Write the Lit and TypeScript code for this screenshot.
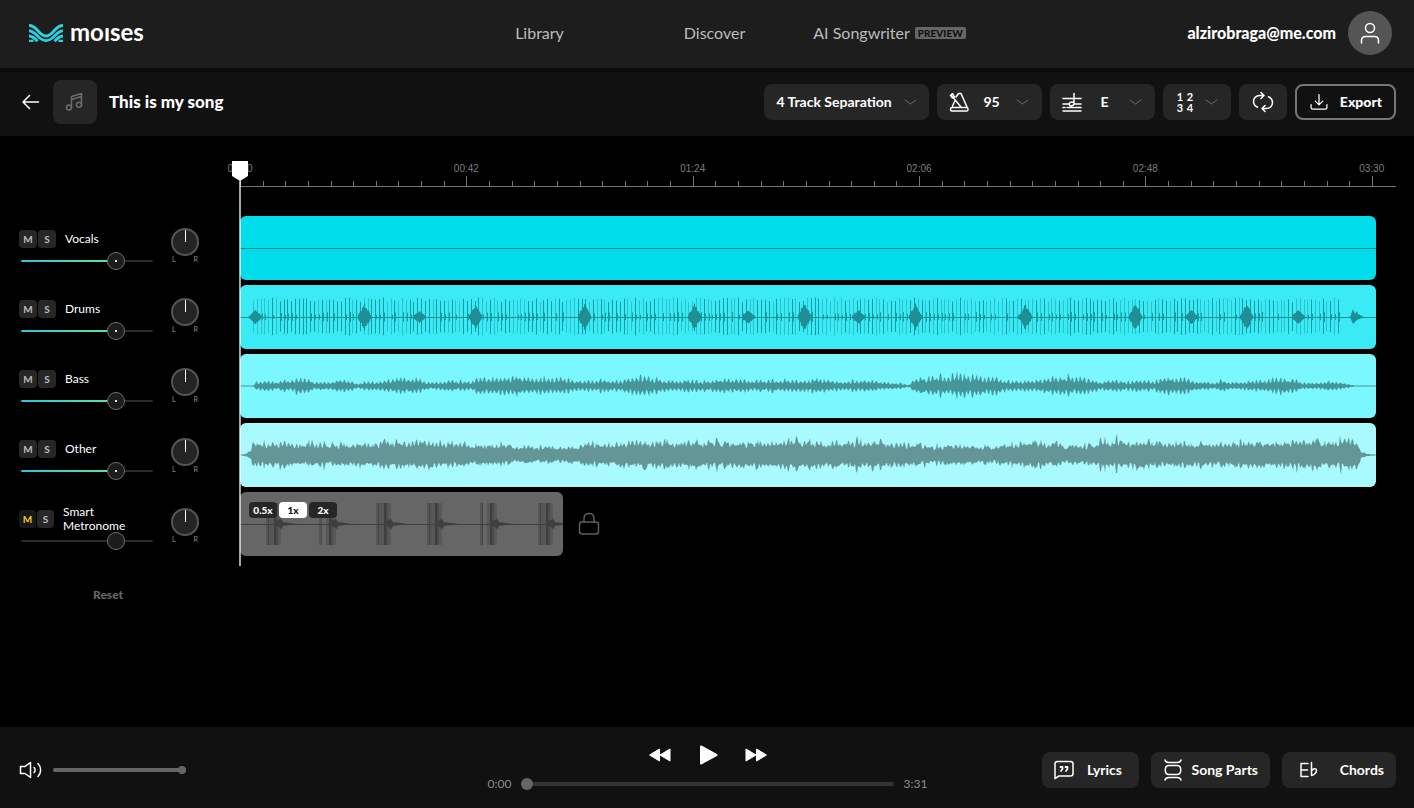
import { LitElement, html, svg, css, nothing } from "lit";
import { customElement, property } from "lit/decorators.js";
import { classMap } from "lit/directives/class-map.js";

const CLIP_W = 1136;
const MID = 32;

/* Small deterministic generator, so that every render draws the same wave. */
function noise(seed: number) {
  let s = seed;
  return () => {
    s = (s * 1664525 + 1013904223) % 4294967296;
    return s / 4294967296;
  };
}

type Point = [number, number];

function envelopeAt(points: Point[], x: number) {
  for (let i = 1; i < points.length; i++) {
    if (x <= points[i][0]) {
      const [x0, y0] = points[i - 1];
      const [x1, y1] = points[i];
      return y0 + ((y1 - y0) * (x - x0)) / (x1 - x0);
    }
  }
  return points[points.length - 1][1];
}

function wavePath(points: Point[], seed: number, rough: number, spike: number) {
  const rnd = noise(seed);
  const top: string[] = [];
  const bottom: string[] = [];
  let swell = 1;
  for (let x = 0; x <= CLIP_W; x++) {
    const e = envelopeAt(points, x);
    if (x % 4 === 0) swell = 0.85 + rnd() * 0.3;
    const beat = (x % 4 < 2 ? 1 : 1 - rough) * swell;
    const peak = rnd() > 0.93 ? spike : 1;
    const up = Math.max(0.5, e * beat * peak * (0.75 + rnd() * 0.45));
    const down = Math.max(0.5, e * beat * peak * (0.75 + rnd() * 0.4));
    top.push(`${x} ${(MID - up).toFixed(1)}`);
    bottom.unshift(`${x} ${(MID + down).toFixed(1)}`);
  }
  return `M${top.join("L")}L${bottom.join("L")}Z`;
}

const BASS: Point[] = [
  [0, 0.5], [13, 0.5], [15, 4], [30, 5], [38, 4], [45, 6], [50, 4], [56, 8], [68, 6], [76, 3], [90, 4], [98, 6],
  [110, 5], [117, 2], [128, 5], [140, 4], [150, 6], [160, 7], [180, 6], [185, 4], [200, 4], [215, 5], [232, 4],
  [237, 8], [262, 8], [276, 10], [290, 8], [320, 8], [335, 6], [350, 5], [365, 6], [380, 5], [392, 8], [405, 10],
  [415, 7], [430, 5], [450, 6], [470, 5], [490, 7], [515, 5], [540, 6], [560, 5], [580, 7], [600, 4], [620, 6],
  [640, 4], [660, 3], [668, 1], [676, 7], [690, 10], [705, 9], [722, 11], [735, 9], [755, 8], [770, 5], [785, 5],
  [800, 6], [815, 8], [838, 9], [850, 6], [862, 4], [875, 6], [890, 4], [900, 6], [912, 4], [925, 8], [945, 8],
  [958, 4], [975, 3], [981, 6], [990, 3], [1010, 5], [1022, 5], [1035, 8], [1055, 6], [1065, 3], [1080, 3],
  [1090, 5], [1105, 3], [1112, 1], [1118, 0.5], [1136, 0.5],
];

const OTHER: Point[] = [
  [0, 0.5], [5, 1], [10, 4], [14, 11], [40, 12], [60, 10], [75, 11], [120, 11], [130, 10], [145, 13], [175, 12],
  [188, 14], [200, 12], [225, 12], [238, 9], [262, 10], [280, 8], [310, 8], [338, 8], [350, 11], [380, 11],
  [420, 13], [450, 12], [480, 13], [520, 12], [560, 14], [590, 12], [640, 13], [672, 10], [690, 8], [720, 9],
  [750, 8], [775, 11], [815, 12], [825, 8], [845, 10], [860, 13], [885, 12], [905, 13], [940, 12], [980, 12],
  [1005, 12], [1030, 12], [1060, 13], [1100, 13], [1117, 13], [1121, 4], [1128, 1], [1134, 0.5], [1136, 0.5],
];

const ACCENTS: Point[] = [
  [15, 6], [124, 12], [179, 5], [235, 12], [344, 13], [454, 12], [508, 6], [564, 13], [618, 6], [675, 12],
  [785, 12], [895, 13], [951, 6], [1006, 12], [1058, 6],
];

const TICK_GROUPS: [number, number, number][] = [
  [26, 5, 10], [79, 2, 17], [136, 5, 9], [187, 5, 10], [240, 3, 17], [298, 5, 9],
];

function drumsWave() {
  const rnd = noise(77);
  const dark: string[] = [];
  const soft: string[] = [];
  for (let i = 0; i < 285; i++) {
    const x = Math.round(13 + i * 3.82);
    if (x > 1100) break;
    const h = 15 + rnd() * 4.5;
    const line = `M${x}.5 ${(MID - h).toFixed(1)}V${(MID + h - 1).toFixed(1)}`;
    (rnd() > 0.5 ? dark : soft).push(line);
    if (rnd() > 0.4) {
      const s = 2 + rnd() * 3;
      dark.push(`M${x + 1}.5 ${(MID - s).toFixed(1)}V${(MID + s).toFixed(1)}`);
    }
  }
  const gems: string[] = [];
  for (const [x, h] of ACCENTS) {
    for (let d = -6; d <= 6; d++) {
      const s = h * (1 - Math.abs(d) / 7) * (0.8 + rnd() * 0.35) + 0.5;
      gems.push(`M${x + d}.5 ${(MID - s).toFixed(1)}V${(MID + s).toFixed(1)}`);
    }
  }
  return svg`
    <path d=${soft.join("")} stroke="#1c9aa3" stroke-opacity=".5" fill="none" />
    <path d=${dark.join("")} stroke="#128d97" stroke-opacity=".85" fill="none" />
    <path d="M0 32.500H1136" stroke="#1f8f96" />
    <path d=${gems.join("")} stroke="#208e95" stroke-width="1.200" fill="none" />
    <path d="M1110 32L1113 24L1115 29L1117 26L1118 29L1124 32L1117 35L1113 39Z" fill="#208e95" />`;
}

function metronomeWave() {
  return svg`
    <path d="M0 32.500H323" stroke="#404040" />
    ${TICK_GROUPS.map(([x, a, b]) => {
      const centre = x + (b > 12 ? b - 7 : 8);
      return svg`
        <rect x=${x} y="11" width=${a} height="42" fill="#404040" opacity=".45" />
        <rect x=${x + 2} y="11" width="1" height="42" fill="#3a3a3a" opacity=".6" />
        <rect x=${centre - 3} y="11" width="3" height="42" fill="#404040" opacity=".4" />
        <rect x=${centre} y="11" width="2" height="42" fill="#3a3a3a" opacity=".9" />
        <rect x=${centre + 2} y="11" width="2" height="42" fill="#3a3a3a" opacity=".6" />
        <rect x=${centre + 4} y="11" width="3" height="42" fill="#404040" opacity=".35" />
        <path d="M${centre - 1} 32L${centre + 2} 29L${centre + 7} 27L${centre + 9} 30L${centre + 24} 32L${
          centre + 9
        } 34L${centre + 8} 37L${centre + 2} 34Z" fill="#404040" />`;
    })}`;
}

const icons = {
  logo: svg`<g fill="none" stroke="#29d3e0" stroke-width="2.800">
    <path d="M0 1.500C8.500 1.500 9.500 12 17 12S25.500 1.500 34 1.500" />
    <path d="M0 6.800C7.500 7 9 16.600 17 16.600S26.500 7 34 6.800" />
    <path d="M0 12C4 12.200 6 14.500 8.500 17.300M34 12C30 12.200 28 14.500 25.500 17.300" />
    <path d="M0 16.800H4.500M29.500 16.800H34" stroke-width="2.200" /></g>`,
  user: svg`<circle cx="12" cy="7" r="4.500" /><path d="M3.500 22V19.500C3.500 17 5 15.500 7.500 15.500H16.500C19 15.500 20.500 17 20.500 19.500V22" />`,
  back: svg`<path d="M19.500 12H4M10.500 5.500L4 12L10.500 18.500" />`,
  note: svg`<circle cx="6" cy="17.500" r="2.500" /><circle cx="16" cy="14.800" r="2.500" /><path d="M8.500 17.500V6.500L18.500 3.500V14.800M8.500 9.500L18.500 6.500" />`,
  metronome: svg`<path d="M9 7L11.500 3.500H14L20 17M8 10.500L5.500 16M5 17.500H19.500C20.300 17.500 21 18.200 21 19V19.500C21 20.300 20.300 21 19.500 21H5C4.200 21 3.500 20.300 3.500 19.500V19C3.500 18.200 4.200 17.500 5 17.500ZM4.500 5.500L14 17" /><path d="M3.500 5.500L5.500 3.500L7.500 7L5.500 8Z" />`,
  pitch: svg`<path d="M3 8.500H21M3 14H9M15 14H21M3 21H21M3 17.500H5M7 17.500H21M14 3.500V14M14 12.500C11 11 8.500 13 9.500 15C10.500 16.500 13.500 16 14 14" />`,
  loop: svg`<path d="M13 5.500H8.500C5 5.500 2.500 8.200 2.500 11.500C2.500 14 4 16 6.500 17.200M11 18.500H15.500C19 18.500 21.500 15.800 21.500 12.500C21.500 10 20 8 17.500 6.800M10 2.500L13 5.500L10 8.500M14 15.500L11 18.500L14 21.500" />`,
  download: svg`<path d="M12 3V15M7.500 11L12 15.500L16.500 11M2.500 15V18.500C2.500 19.900 3.100 20.500 4.500 20.500H19.500C20.900 20.500 21.500 19.900 21.500 18.500V15" />`,
  chevron: svg`<path d="M1 1L6.500 5L12 1" />`,
  volume: svg`<path d="M1.500 8.500H6L11.500 4.500V19.500L6 15.500H1.500ZM15 9.500C16.500 10.800 16.500 13.200 15 14.500M19 5.500C22.500 9 22.500 15 19 18.500" />`,
  lock: svg`<rect x="2.500" y="10" width="19" height="12" rx="2.500" /><path d="M7 10V6.500C7 3.500 9 1.500 12 1.500S17 3.500 17 6.500V10" />`,
  lyrics: svg`<path d="M3 20.500V6C3 4.500 4 3.500 5.500 3.500H18.500C20 3.500 21 4.500 21 6V15.500C21 17 20 18 18.500 18H7Z" /><path d="M8.500 9H10.500V10.800L9 13M13.500 9H15.500V10.800L14 13" stroke-width="1.800" />`,
  parts: svg`<path d="M4 2C4.500 4 6 4.500 8 4.500H16C18 4.500 19.500 4 20 2M4 22C4.500 20 6 19.500 8 19.500H16C18 19.500 19.500 20 20 22M8 7.500H16C21 7.500 21 16.500 16 16.500H8C3 16.500 3 7.500 8 7.500Z" />`,
  chords: svg`<path d="M11 5.500H4V18.500H11M4 12H10.500M14.500 4.500V17.500C17 17 19.500 14.800 19.500 12.500C19.500 10.300 16.500 10 14.500 12.800" />`,
};

const icon = (shape: unknown, size = 24) =>
  html`<svg class="icon" viewBox="0 0 24 24" width=${size} height=${size} aria-hidden="true">${shape}</svg>`;

const chevron = html`<svg class="icon chevron" viewBox="0 0 13 6" width="13" height="6" aria-hidden="true">
  ${icons.chevron}
</svg>`;

const shared = css`
  *, *::before, *::after { box-sizing: border-box; }
  button, select, input { font: inherit; color: inherit; margin: 0; }
  button { border: 0; padding: 0; background: none; cursor: pointer; }
  .icon { flex: none; display: block; fill: none; stroke: currentColor; stroke-width: 1.5; stroke-linejoin: round; stroke-linecap: round; }
`;

@customElement("track-strip")
class TrackStrip extends LitElement {
  @property() name = "";
  @property({ type: Boolean }) muted = false;

  static styles = [
    shared,
    css`
      :host { display: grid; grid-template-columns: 135px 30px; column-gap: 16px; height: 70px; padding: 8px 0 0 19px; }
      .head { display: flex; align-items: center; height: 28px; margin-top: 1px; }
      .toggle { width: 18px; height: 18px; border-radius: 4px; background: #272727; color: #bdbdbd; font-size: 10px; font-weight: 700; line-height: 18px; }
      .toggle + .toggle { margin-left: 1px; }
      .toggle.on { background: #181818; color: #f2c620; }
      .name { margin-left: 9px; font-size: 12px; line-height: 14px; color: #fff; }
      .level { display: block; width: 132px; height: 16px; margin: 0 2px; appearance: none; background: none; }
      .level::-webkit-slider-runnable-track { height: 2px; border-radius: 1px; background: linear-gradient(90deg, #30c3dc, #5fe59a) 0 0 / 75% 100% no-repeat #2a2a2a; }
      .level.off::-webkit-slider-runnable-track { background: #2a2a2a; }
      .level::-webkit-slider-thumb { appearance: none; width: 18px; height: 18px; margin-top: -8px; border: 1px solid #6e6e6e; border-radius: 50%; background: radial-gradient(circle, #d8f5f5 1px, #1c1c1c 1px); }
      .level.off::-webkit-slider-thumb { background: #1c1c1c; }
      .pan { display: flex; flex-direction: column; align-items: center; padding-top: 4px; }
      .knob { width: 28px; height: 28px; appearance: none; border: 2px solid #555; border-radius: 50%; background: #242424; }
      .knob::-webkit-slider-runnable-track { height: 24px; }
      .knob::-webkit-slider-thumb { appearance: none; width: 1px; height: 12px; background: #fff; }
      .ends { display: flex; justify-content: space-between; width: 26px; font-size: 7px; line-height: 7px; color: #8a8a8a; }
    `,
  ];

  render() {
    return html`
      <div>
        <div class="head">
          <button class=${classMap({ toggle: true, on: this.muted })} aria-label="Mute ${this.name}">M</button>
          <button class="toggle" aria-label="Solo ${this.name}">S</button>
          <label class="name" for="level">${this.name}</label>
        </div>
        <input id="level" class=${classMap({ level: true, off: this.muted })} type="range" value="75" />
      </div>
      <div class="pan">
        <input class="knob" type="range" value="50" aria-label="${this.name} pan" />
        <div class="ends"><span>L</span><span>R</span></div>
      </div>
    `;
  }
}

@customElement("time-ruler")
class TimeRuler extends LitElement {
  static styles = [
    shared,
    css`
      :host { display: flex; height: 27px; padding-right: 20px; border-bottom: 1px solid #757575; font: 10px/14px "Liberation Sans", Arial, sans-serif; color: #7d7d7d; }
      .span { flex: 420; display: grid; grid-template-rows: 16px 10px; }
      .rest { flex: 8; }
      .mark { display: flex; justify-content: center; width: 0; padding-top: 2px; }
      .ticks { display: flex; align-items: flex-end; }
      .tick { flex: 1; height: 5px; border-left: 1px solid #757575; }
      .tick:first-child { height: 10px; }
    `,
  ];

  render() {
    return html`
      ${["00:00", "00:42", "01:24", "02:06", "02:48"].map(
        (t) => html`<div class="span">
          <div class="mark"><span>${t}</span></div>
          <div class="ticks">${Array.from({ length: 10 }, () => html`<span class="tick"></span>`)}</div>
        </div>`
      )}
      <div class="span rest">
        <div class="mark"><span>03:30</span></div>
        <div class="ticks"><span class="tick"></span></div>
      </div>
    `;
  }
}

@customElement("app-root")
class AppRoot extends LitElement {
  static styles = [
    shared,
    css`
      :host { display: flex; flex-direction: column; min-height: 100vh; background: #000; color: #fff; font: 14px/20px Lato, "Open Sans", sans-serif; }
      .top { display: grid; grid-template-columns: 1fr auto 1fr; align-items: center; height: 68px; padding: 0 22px 2px 29px; background: #1d1d1d; }
      .brand { display: flex; align-items: center; gap: 7px; color: #fff; text-decoration: none; font-size: 24px; line-height: 20px; font-weight: 700; }
      .brand span { padding-bottom: 2px; }
      .nav { display: grid; grid-template-columns: repeat(3, 175px); justify-items: center; padding-left: 8px; font-size: 16px; }
      .nav a { display: flex; align-items: center; gap: 5px; color: #bcbcbc; text-decoration: none; white-space: nowrap; }
      .badge { padding: 0 3px; border-radius: 2px; background: #666; color: #111; font-size: 10px; line-height: 12px; font-weight: 900; }
      .account { display: flex; align-items: center; justify-content: flex-end; gap: 12px; font-size: 16px; font-weight: 900; }
      .avatar { display: grid; place-items: center; width: 44px; height: 44px; border-radius: 50%; background: #555; }
      .bar { display: flex; align-items: center; gap: 8px; height: 68px; padding: 0 18px 4px 19px; border-top: 4px solid #0b0b0b; background: #111; }
      .cover { display: grid; place-items: center; width: 44px; height: 44px; margin: 0 4px 0 2px; border-radius: 8px; background: #262626; color: #6b6b6b; }
      .title { flex: 1; margin: 0; font-size: 17px; line-height: 20px; font-weight: 900; }
      .pill { display: flex; align-items: center; justify-content: space-between; height: 36px; padding: 0 12px; border-radius: 8px; background: #262626; font-size: 14px; font-weight: 700; }
      .pill select { appearance: none; border: 0; background: none; padding: 0; text-align: center; cursor: pointer; }
      .chevron { stroke: #6c6c6c; stroke-width: 1; }
      .pick { gap: 12px; }
      .value { width: 105px; padding: 0 13px 0 10px; }
      .pill.value select { padding-right: 4px; }
      .bars { width: 68px; padding: 0 13px; }
      .count { display: grid; grid-template-columns: 8px 8px; gap: 0 2px; font-size: 11px; line-height: 11px; }
      .square { width: 48px; }
      .export { width: 101px; border: 2px solid #767676; background: none; font-weight: 900; }
      .studio { flex: 1; display: grid; grid-template-columns: 220px 1fr; column-gap: 20px; align-items: start; padding: 24px 18px 24px 0; }
      .strips { display: flex; flex-direction: column; padding-top: 56px; }
      .reset { align-self: flex-start; margin: 19px 0 0 93px; font-size: 12px; line-height: 20px; font-weight: 900; color: #666; }
      .timeline { position: relative; padding-bottom: 10px; }
      .lanes { display: flex; flex-direction: column; gap: 5px; padding: 29px 20px 0 0; }
      .clip { height: 64px; overflow: hidden; border-radius: 6px; }
      .wave { display: block; width: 100%; height: 64px; }
      .vocals { background: #00dce9; }
      .drums { background: #3aebf5; }
      .bass { background: #7af7ff; }
      .other { background: #a8faff; }
      .locked { display: flex; align-items: center; gap: 14px; color: #5c5c5c; }
      .click { position: relative; width: 323px; background: #666; }
      .speeds { position: absolute; top: 10px; left: 9px; display: flex; gap: 2px; }
      .speed { width: 28px; height: 16px; border-radius: 4px; background: #262626; color: #fff; font-size: 10px; line-height: 16px; font-weight: 900; }
      .speed.on { background: #fff; color: #111; }
      .playhead { position: absolute; top: 1px; bottom: 0; left: -8px; width: 16px; display: flex; flex-direction: column; align-items: center; pointer-events: none; }
      .grip { flex: none; width: 16px; height: 20px; background: #fff; clip-path: polygon(0 0, 100% 0, 100% 75%, 50% 100%, 0 75%); }
      .needle { flex: 1; width: 2px; background: #fff; opacity: 0.65; }
      .player { display: grid; grid-template-columns: 1fr 440px 1fr; align-items: center; height: 81px; padding: 5px 18px 0 19px; background: #111; }
      .sound { display: flex; align-items: center; gap: 10px; }
      .slim { appearance: none; display: block; height: 12px; background: none; }
      .volume { width: 133px; }
      .volume::-webkit-slider-runnable-track { height: 4px; border-radius: 2px; background: #666; }
      .volume::-webkit-slider-thumb { appearance: none; width: 8px; height: 8px; margin-top: -2px; border-radius: 50%; background: #666; }
      .transport { display: flex; flex-direction: column; gap: 4px; padding-bottom: 6px; }
      .keys { display: flex; justify-content: center; align-items: center; gap: 24px; height: 30px; }
      .solid { display: block; fill: #fff; stroke: #fff; stroke-linejoin: round; }
      .seek { display: flex; align-items: center; gap: 10px; font-size: 12px; line-height: 20px; color: #8c8c8c; }
      .seek input { flex: 1; min-width: 0; }
      .position::-webkit-slider-runnable-track { height: 4px; border-radius: 2px; background: #333; }
      .position::-webkit-slider-thumb { appearance: none; width: 12px; height: 12px; margin-top: -4px; border-radius: 50%; background: #666; }
      .panels { display: flex; justify-content: flex-end; gap: 12px; }
      .panels .pill { padding: 0 12px 0 10px; }
      .parts { width: 119px; }
      .panels .lyrics { width: 97px; padding-right: 17px; }
      .panels .chords { width: 114px; padding-left: 15px; }
    `,
  ];

  private lane(kind: string, label: string, shape: unknown) {
    return html`<div class="clip ${kind}" role="img" aria-label="${label} waveform">
      <svg class="wave" viewBox="0 0 1136 64" preserveAspectRatio="none" aria-hidden="true">${shape}</svg>
    </div>`;
  }

  private select(label: string, value: string, shape: unknown = nothing) {
    return html`<label class="pill ${shape === nothing ? "pick" : "value"}">
      ${shape === nothing ? nothing : icon(shape)}
      <select aria-label=${label}><option>${value}</option></select>
      ${chevron}
    </label>`;
  }

  render() {
    return html`
      <header class="top">
        <a class="brand" href="#home">
          <svg viewBox="0 0 34 18" width="34" height="18" aria-hidden="true">${icons.logo}</svg>
          <span>moıses</span>
        </a>
        <nav class="nav">
          <a href="#library">Library</a>
          <a href="#discover">Discover</a>
          <a href="#songwriter">AI Songwriter <span class="badge">PREVIEW</span></a>
        </nav>
        <div class="account">
          <span>alzirobraga@me.com</span>
          <button class="avatar" aria-label="Account">${icon(icons.user)}</button>
        </div>
      </header>

      <section class="bar">
        <button aria-label="Back">${icon(icons.back)}</button>
        <span class="cover">${icon(icons.note)}</span>
        <h1 class="title">This is my song</h1>
        ${this.select("Separation", "4 Track Separation")}
        ${this.select("Tempo", "95", icons.metronome)}
        ${this.select("Key", "E", icons.pitch)}
        <button class="pill bars" aria-label="Count in">
          <span class="count"><span>1</span><span>2</span><span>3</span><span>4</span></span>
          ${chevron}
        </button>
        <button class="pill square" aria-label="Loop">${icon(icons.loop)}</button>
        <button class="pill export">${icon(icons.download, 20)}<span>Export</span></button>
      </section>

      <main class="studio">
        <div class="strips">
          ${["Vocals", "Drums", "Bass", "Other"].map((n) => html`<track-strip .name=${n}></track-strip>`)}
          <track-strip .name=${"Smart Metronome"} .muted=${true}></track-strip>
          <button class="reset">Reset</button>
        </div>
        <div class="timeline">
          <time-ruler></time-ruler>
          <div class="lanes">
            ${this.lane("vocals", "Vocals", svg`<path d="M0 32.500H1136" stroke="#14878e" />`)}
            ${this.lane("drums", "Drums", drumsWave())}
            ${this.lane("bass", "Bass", svg`<path d=${wavePath(BASS, 11, 0.45, 1.15)} fill="#469599" />`)}
            ${this.lane("other", "Other", svg`<path d=${wavePath(OTHER, 29, 0.2, 1.3)} fill="#659697" />`)}
            <div class="locked">
              <div class="clip click">
                <svg class="wave" viewBox="0 0 323 64" preserveAspectRatio="none" aria-hidden="true">${metronomeWave()}</svg>
                <div class="speeds">
                  <button class="speed">0.5x</button>
                  <button class="speed on">1x</button>
                  <button class="speed">2x</button>
                </div>
              </div>
              ${icon(icons.lock)}
            </div>
          </div>
          <div class="playhead"><span class="grip"></span><span class="needle"></span></div>
        </div>
      </main>

      <footer class="player">
        <div class="sound">
          ${icon(icons.volume)}
          <input class="slim volume" type="range" value="100" aria-label="Volume" />
        </div>
        <div class="transport">
          <div class="keys">
            <button aria-label="Rewind">
              <svg class="solid" viewBox="0 0 24 24" width="24" height="24"><path d="M11.500 6V18L1.500 12ZM22 6V18L12 12Z" /></svg>
            </button>
            <button aria-label="Play">
              <svg class="solid" viewBox="0 0 24 24" width="24" height="24" stroke-width="2"><path d="M5 3.500V20.500L20.500 12Z" /></svg>
            </button>
            <button aria-label="Forward">
              <svg class="solid" viewBox="0 0 24 24" width="24" height="24"><path d="M2 6V18L12 12ZM12.500 6V18L22.500 12Z" /></svg>
            </button>
          </div>
          <div class="seek">
            <span>0:00</span>
            <input class="slim position" type="range" value="0" aria-label="Position" />
            <span>3:31</span>
          </div>
        </div>
        <div class="panels">
          <button class="pill lyrics">${icon(icons.lyrics)}<span>Lyrics</span></button>
          <button class="pill parts">${icon(icons.parts)}<span>Song Parts</span></button>
          <button class="pill chords">${icon(icons.chords)}<span>Chords</span></button>
        </div>
      </footer>
    `;
  }
}
